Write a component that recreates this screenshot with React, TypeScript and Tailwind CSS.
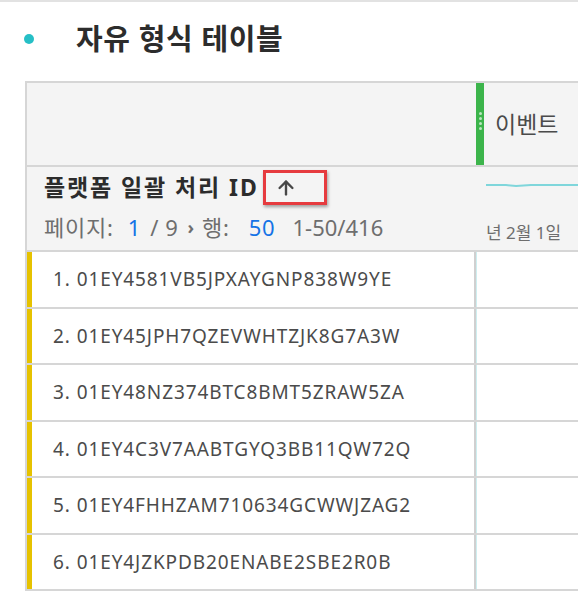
import { ArrowUp } from "lucide-react";

const rows = [
  "01EY4581VB5JPXAYGNP838W9YE",
  "01EY45JPH7QZEVWHTZJK8G7A3W",
  "01EY48NZ374BTC8BMT5ZRAW5ZA",
  "01EY4C3V7AABTGYQ3BB11QW72Q",
  "01EY4FHHZAM710634GCWWJZAG2",
  "01EY4JZKPDB20ENABE2SBE2R0B",
];

const font = { fontFamily: '"Noto Sans", "Noto Sans CJK KR", sans-serif' };

export default function App() {
  return (
    <div
      className="w-[578px] h-[591px] overflow-hidden bg-white border-t-2 border-[#e2e2e2]"
      style={font}
    >
      {/* title */}
      <div className="flex items-center h-[79px] pl-[24px] pb-[6px]">
        <span className="w-[10px] h-[10px] rounded-full bg-[#26bfc6]" />
        <h1 className="ml-[42px] text-[29px] font-bold text-[#2c2c2c] tracking-[0.6px]">
          자유 형식 테이블
        </h1>
      </div>

      {/* table */}
      <div className="ml-[25px] w-[620px] border-l-2 border-t-2 border-[#d6d6d6]">
        <div className="flex h-[84px] bg-[#f4f4f4] border-b-2 border-[#d6d6d6]">
          <div className="w-[449px]" />
          <div className="flex items-center">
            <div className="w-[8px] h-full bg-[#3cb44b] flex flex-col items-center justify-center gap-[2px] pb-[6px]">
              <span className="w-[3px] h-[3px] rounded-full bg-[#b9e6be]" />
              <span className="w-[3px] h-[3px] rounded-full bg-[#b9e6be]" />
              <span className="w-[3px] h-[3px] rounded-full bg-[#b9e6be]" />
              <span className="w-[3px] h-[3px] rounded-full bg-[#b9e6be]" />
            </div>
            <span className="ml-[11px] text-[23px] text-[#4b4b4b]">이벤트</span>
          </div>
        </div>

        <div className="flex h-[85px] bg-[#f4f4f4] border-b-2 border-[#d6d6d6]">
          <div className="w-[449px] pl-[17px] pt-[2px]">
            <div className="flex items-center h-[37px]">
              <span className="text-[23px] font-bold text-[#2c2c2c] tracking-[1.9px]">
                플랫폼 일괄 처리 ID
              </span>
              <span className="ml-[4px] w-[64px] h-[35px] border-[3px] border-[#e63b3f] shadow-[1px_2px_3px_rgba(0,0,0,0.35)] flex items-center pl-[9px]">
                <ArrowUp size={22} strokeWidth={2.6} className="text-[#484848]" />
              </span>
            </div>
            <div className="mt-[5px] text-[22px] text-[#6e6e6e] flex items-center tracking-[0.8px]">
              <span>페이지:</span>
              <span className="ml-[14px] text-[#1473e6]">1</span>
              <span className="ml-[9px]">/</span>
              <span className="ml-[6px]">9</span>
              <span className="ml-[9px] text-[18px] font-bold">›</span>
              <span className="ml-[7px]">행:</span>
              <span className="ml-[19px] text-[#1473e6]">50</span>
              <span className="ml-[17px] tracking-[0px]">1-50/416</span>
            </div>
          </div>
          <div className="flex-1 pl-[10px] pt-[15px]">
            <svg width="130" height="6" viewBox="0 0 130 6" className="block">
              <path
                d="M0 3 L20 3 L30 4 L45 3 L130 3"
                fill="none"
                stroke="#7fd6db"
                strokeWidth="2"
              />
            </svg>
            <div className="mt-[32px] text-[17px] text-[#6e6e6e]">년 2월 1일</div>
          </div>
        </div>

        {rows.map((id, i) => (
          <div key={id} className="flex h-[56.5px] border-b-2 border-[#d6d6d6] bg-white">
            <div className="w-[5px] bg-[#e6c200]" />
            <div className="w-[444px] flex items-center pl-[21px] text-[19px] tracking-[0.9px] text-[#4b4b4b] border-r-2 border-[#d0d0d0]">
              {i + 1}. {id}
            </div>
            <div className="flex-1 border-l border-[#cdeef0]" />
          </div>
        ))}
      </div>
    </div>
  );
}
